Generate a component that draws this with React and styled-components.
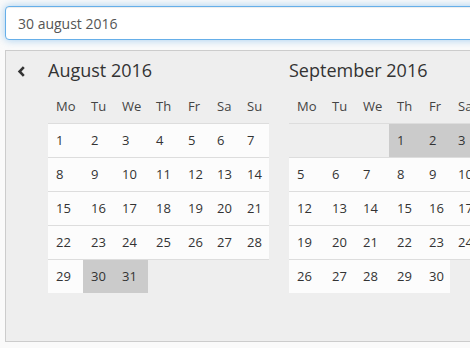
import React from "react";
import styled, { createGlobalStyle } from "styled-components";

const Global = createGlobalStyle`
  html, body {
    margin: 0;
    padding: 0;
    overflow: hidden;
    background: #fafafa;
    font-family: "Open Sans", "DejaVu Sans", sans-serif;
    color: #333;
  }
`;

const Page = styled.div`
  width: 760px;
  padding: 6px 5px;
  box-sizing: border-box;
`;

const DateInput = styled.input`
  display: block;
  width: 100%;
  height: 34px;
  box-sizing: border-box;
  margin: 0 0 10px 0;
  padding: 0 12px;
  border: 1px solid #66afe9;
  border-radius: 4px;
  background: #fff;
  font-family: "Open Sans", sans-serif;
  font-size: 14px;
  color: #555;
  outline: none;
  box-shadow: inset 0 1px 1px rgba(0, 0, 0, 0.075), 0 0 8px rgba(102, 175, 233, 0.6);
`;

const Panel = styled.div`
  display: flex;
  align-items: flex-start;
  height: 292px;
  box-sizing: border-box;
  padding-top: 7px;
  border: 1px solid #ccc;
  background: #eeeeee;
`;

const PrevButton = styled.div`
  flex: none;
  width: 42px;
  height: 24px;
  box-sizing: border-box;
  padding-left: 11px;
  display: flex;
  align-items: center;
  padding-top: 2px;
`;

const Months = styled.div`
  display: flex;
  gap: 20px;
  align-items: flex-start;
`;

const Month = styled.div`
  display: flex;
  flex-direction: column;
`;

const MonthTitle = styled.div`
  font-size: 18px;
  line-height: 24px;
  margin-bottom: 8px;
  color: #333;
  white-space: nowrap;
`;

const Table = styled.table`
  border-collapse: collapse;
  border-spacing: 0;
  table-layout: fixed;
  width: 221px;
  font-size: 13px;
`;

const HeadRow = styled.tr`
  border-bottom: 1px solid #ddd;
`;

const WeekRow = styled.tr`
  border-bottom: ${(p) => (p.$last ? "none" : "1px solid #ddd")};
`;

const HeadCell = styled.th`
  box-sizing: border-box;
  width: ${(p) => p.$w}px;
  height: 33px;
  padding: 0 0 0 8px;
  font-weight: 400;
  text-align: left;
  color: #444;
  white-space: nowrap;
`;

const DayCell = styled.td`
  height: 33px;
  padding: 0 0 0 8px;
  text-align: left;
  color: #333;
  white-space: nowrap;
  background: ${(p) =>
    p.$state === "selected" ? "#cbcbcb" : p.$state === "empty" ? "transparent" : "#fcfcfc"};
`;

const WEEKDAYS = [
  ["Mo", 35],
  ["Tu", 31],
  ["We", 34],
  ["Th", 32],
  ["Fr", 29],
  ["Sa", 30],
  ["Su", 30],
];

function buildWeeks(offset, days) {
  const cells = [];
  for (let i = 0; i < offset; i++) cells.push(null);
  for (let d = 1; d <= days; d++) cells.push(d);
  const weeks = [];
  for (let i = 0; i < cells.length; i += 7) weeks.push(cells.slice(i, i + 7));
  return weeks;
}

const MONTHS = [
  { title: "August 2016", offset: 0, days: 31, selected: [30, 31] },
  { title: "September 2016", offset: 3, days: 30, selected: [1, 2, 3, 4] },
];

function MonthView({ title, offset, days, selected }) {
  const weeks = buildWeeks(offset, days);
  return (
    <Month>
      <MonthTitle>{title}</MonthTitle>
      <Table>
        <thead>
          <HeadRow>
            {WEEKDAYS.map(([w, width]) => (
              <HeadCell key={w} $w={width}>
                {w}
              </HeadCell>
            ))}
          </HeadRow>
        </thead>
        <tbody>
          {weeks.map((week, wi) => (
            <WeekRow key={wi} $last={wi === weeks.length - 1}>
              {week.map((d, di) =>
                d === null ? (
                  <DayCell key={di} $state="empty" />
                ) : (
                  <DayCell key={di} $state={selected.includes(d) ? "selected" : "normal"}>
                    {d}
                  </DayCell>
                )
              )}
            </WeekRow>
          ))}
        </tbody>
      </Table>
    </Month>
  );
}

export default function App() {
  return (
    <>
      <Global />
      <Page>
        <DateInput defaultValue="30 august 2016" />
        <Panel>
          <PrevButton>
            <svg width="9" height="11" viewBox="0 0 9 11">
              <path d="M6.8 1.2 L2.6 5.5 L6.8 9.8" fill="none" stroke="#333" strokeWidth="2.6" />
            </svg>
          </PrevButton>
          <Months>
            {MONTHS.map((m) => (
              <MonthView key={m.title} {...m} />
            ))}
          </Months>
        </Panel>
      </Page>
    </>
  );
}
